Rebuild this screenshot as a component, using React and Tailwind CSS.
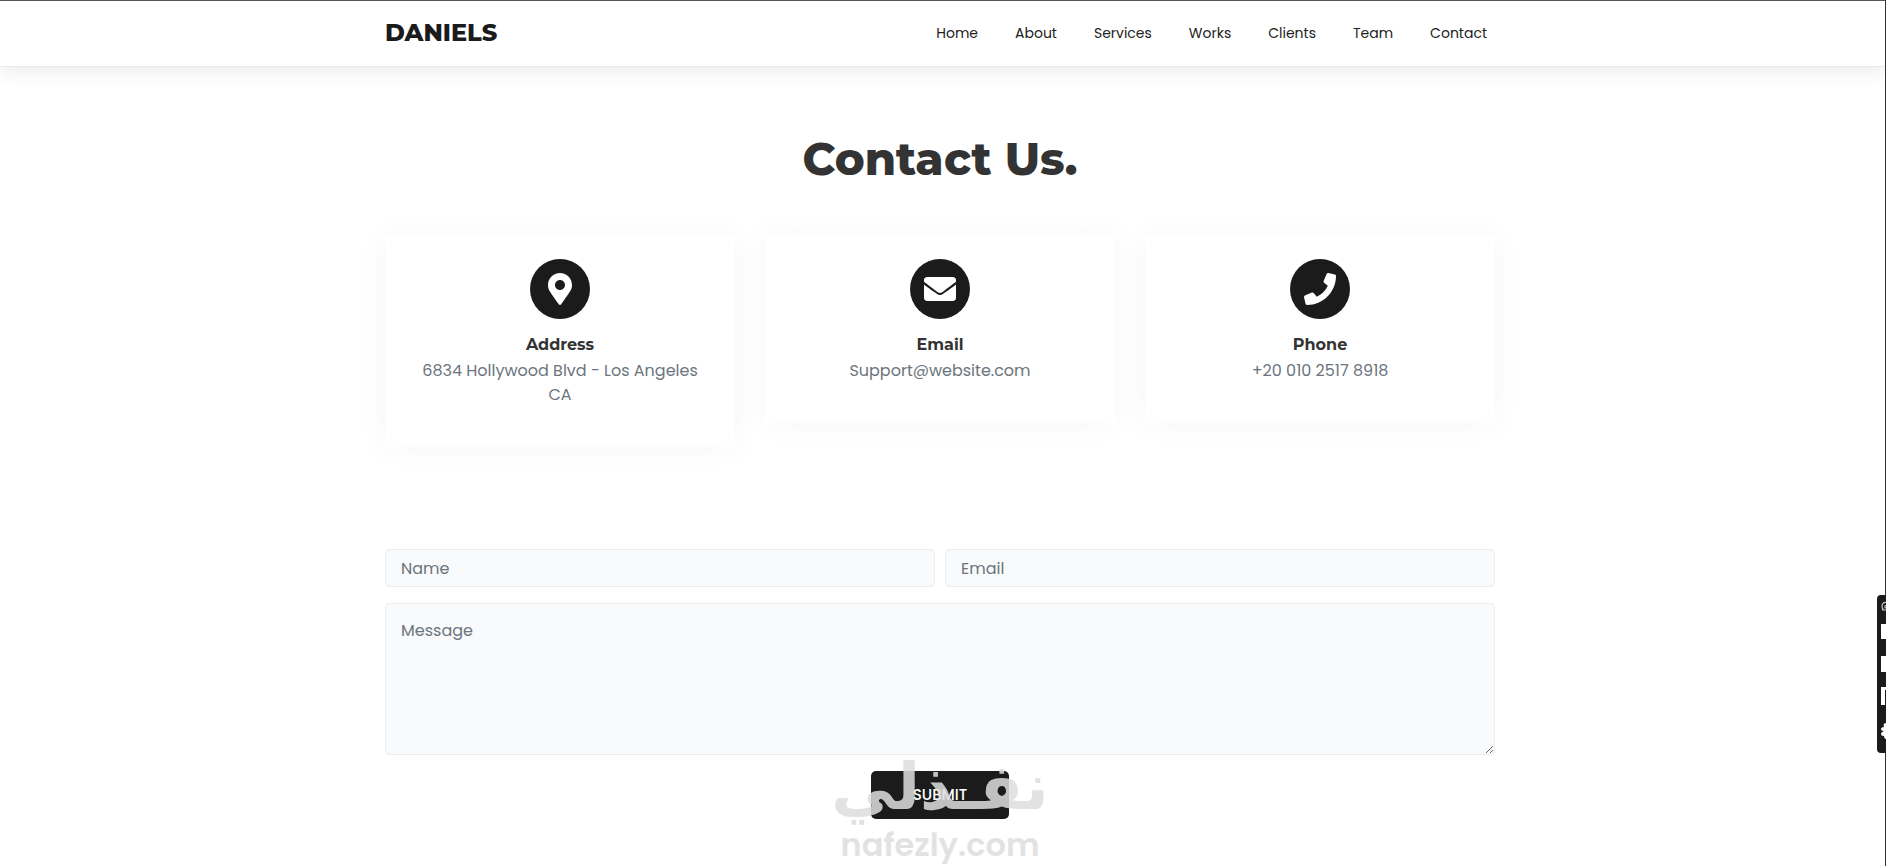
import React, { useState } from 'react';
import { FaEnvelope, FaMapMarkerAlt, FaPhone } from 'react-icons/fa';

const links = ['Home', 'About', 'Services', 'Works', 'Clients', 'Team', 'Contact'];

const cards = [
    { title: 'Address', text: '6834 Hollywood Blvd - Los Angeles CA', icon: FaMapMarkerAlt },
    { title: 'Email', text: 'Support@website.com', icon: FaEnvelope },
    { title: 'Phone', text: '+20 010 2517 8918', icon: FaPhone },
];

const Header = () => (
    <header className="border-t border-b border-t-[#555555] border-b-[#e9ebed] bg-white pr-[6px] shadow-[0_4px_18px_rgba(40,60,80,0.10)]">
        <div className="mx-auto flex h-[65px] max-w-[1110px] items-center justify-between pb-[2px]">
            <a href="#home" className="font-[Montserrat,Poppins,sans-serif] text-2xl font-extrabold text-[#1b1b1b]">
                DANIELS
            </a>
            <nav className="flex gap-[37px] pr-2">
                {links.map((link) => (
                    <a key={link} href={`#${link.toLowerCase()}`} className="text-sm text-[#222222]">
                        {link}
                    </a>
                ))}
            </nav>
        </div>
    </header>
);

const ContactCard = ({ title, text, icon: Icon }) => (
    <div className="flex flex-1 flex-col items-center bg-white px-8 pt-6 pb-10 text-center shadow-[0_0_30px_rgba(0,0,0,0.04)]">
        <div className="mb-[14px] flex size-[60px] items-center justify-center rounded-full bg-[#1b1b1b] text-white">
            <Icon size={32} />
        </div>
        <h3 className="mb-[2px] font-[Montserrat,Poppins,sans-serif] text-base font-bold text-[#333333]">{title}</h3>
        <p className="text-base text-[#6c757d]">{text}</p>
    </div>
);

const Watermark = () => (
    <div className="pointer-events-none absolute -top-5 left-1/2 flex -translate-x-1/2 flex-col items-center gap-1 whitespace-nowrap text-[#dedede] opacity-85">
        <span dir="rtl" lang="ar" className="font-['DejaVu_Sans',sans-serif] text-[64px] leading-[72px] font-bold">
            نفـذلي
        </span>
        <span className="text-[32px] leading-[36px] font-semibold">nafezly.com</span>
    </div>
);

const ContactForm = () => {
    const [form, setForm] = useState({ name: '', email: '', message: '' });

    const handleChange = (e) => {
        setForm({ ...form, [e.target.name]: e.target.value });
    };

    const field = 'w-full rounded border border-[#ebeeee] bg-[#f8fafb] px-[15px] text-base text-[#495057] placeholder:text-[#6c757d]';

    return (
        <form onSubmit={(e) => e.preventDefault()} className="flex flex-col gap-4">
            <div className="flex gap-[10px]">
                <input
                    type="text"
                    name="name"
                    aria-label="Name"
                    placeholder="Name"
                    value={form.name}
                    onChange={handleChange}
                    className={`${field} h-[38px]`}
                />
                <input
                    type="email"
                    name="email"
                    aria-label="Email"
                    placeholder="Email"
                    value={form.email}
                    onChange={handleChange}
                    className={`${field} h-[38px]`}
                />
            </div>
            <textarea
                name="message"
                aria-label="Message"
                placeholder="Message"
                value={form.message}
                onChange={handleChange}
                className={`${field} block h-[152px] resize py-[15px]`}
            />
            <div className="relative flex justify-center">
                <button type="submit" className="h-12 rounded-[5px] bg-[#1b1b1b] px-[42px] text-[15px] font-medium text-white">
                    SUBMIT
                </button>
                <Watermark />
            </div>
        </form>
    );
};

// Floating toolbar, mostly outside the right edge
const SideToolbar = () => (
    <div className="absolute inset-y-0 right-0 w-[9px] overflow-hidden">
        <div className="absolute inset-y-0 right-0 w-px bg-[#333333]" />
        <div className="absolute top-[595px] right-0 h-[158px] w-[9px] rounded-l bg-[#1b1b1b]">
            <svg width="9" height="158" viewBox="0 0 9 158" fill="#ffffff">
                <path d="M9 7.500C6.500 7 5 9 5 11.500c0 1.500.5 2.500 1.500 3M5 15h4M9 10.500c-1.500 0-1.500 2.500 0 2.500" fill="none" stroke="#cccccc" strokeWidth="1.200" />
                <path d="M4 29h5v15H4zM4 61h5v16H4zM4 92h5v3H8v15H4z" />
                <path d="M9 128c-2 0-3 2-2 4-2 0-3 1-3 2s1 2 3 2c-2 1-3 2-3 3s1 2 3 2c0 2 1 3 2 3z" />
            </svg>
        </div>
    </div>
);

const App = () => {
    return (
        <div className="relative min-h-screen overflow-hidden bg-white font-[Poppins,Inter,sans-serif]">
            <Header />
            <div className="pr-[6px]">
                <main className="mx-auto max-w-[1110px] pt-16">
                    <h1 className="text-center font-[Montserrat,Poppins,sans-serif] text-[45px] leading-[56px] font-extrabold text-[#333333]">
                        Contact Us.
                    </h1>
                    <section className="mt-12 flex h-[314px] items-start gap-[30px]">
                        {cards.map((card) => (
                            <ContactCard key={card.title} {...card} />
                        ))}
                    </section>
                    <ContactForm />
                </main>
            </div>
            <SideToolbar />
        </div>
    );
};

export default App;
